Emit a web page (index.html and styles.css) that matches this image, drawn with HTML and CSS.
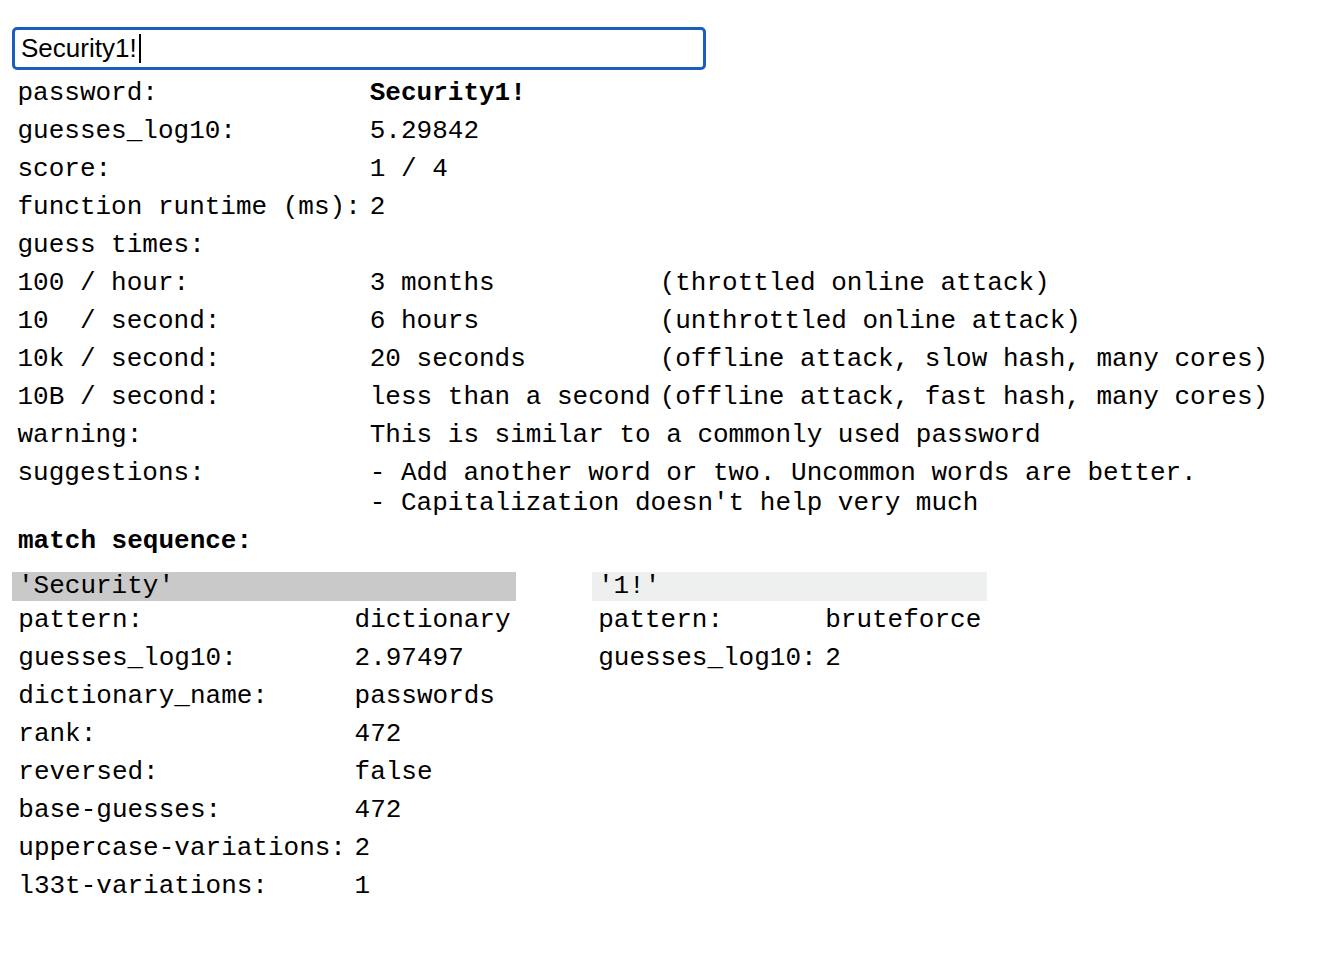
FILE: index.html
```html
<!DOCTYPE html>
<html>
<head>
<meta charset="utf-8">
<link rel="stylesheet" href="styles.css">
</head>
<body>
<div class="page">
  <div class="input-wrap">
    <input class="pw-input" type="text" value="Security1!">
    <span class="caret"></span>
  </div>
  <table class="results">
    <tr><td>password:</td><td colspan="2"><strong>Security1!</strong></td></tr>
    <tr><td>guesses_log10:</td><td colspan="2">5.29842</td></tr>
    <tr><td>score:</td><td colspan="2">1 / 4</td></tr>
    <tr><td>function runtime (ms):</td><td colspan="2">2</td></tr>
    <tr><td colspan="3">guess times:</td></tr>
    <tr><td>100 / hour:</td><td>3 months</td><td>(throttled online attack)</td></tr>
    <tr><td>10  / second:</td><td>6 hours</td><td>(unthrottled online attack)</td></tr>
    <tr><td>10k / second:</td><td>20 seconds</td><td>(offline attack, slow hash, many cores)</td></tr>
    <tr><td>10B / second:</td><td>less than a second</td><td>(offline attack, fast hash, many cores)</td></tr>
    <tr><td>warning:</td><td colspan="2">This is similar to a commonly used password</td></tr>
    <tr><td>suggestions:</td><td colspan="2">- Add another word or two. Uncommon words are better.<br>- Capitalization doesn't help very much</td></tr>
  </table>
  <div class="seq-title">match sequence:</div>
  <div class="matches">
    <div class="match">
      <div class="match-head dark">'Security'</div>
      <table class="match-table">
        <tr><td>pattern:</td><td>dictionary</td></tr>
        <tr><td>guesses_log10:</td><td>2.97497</td></tr>
        <tr><td>dictionary_name:</td><td>passwords</td></tr>
        <tr><td>rank:</td><td>472</td></tr>
        <tr><td>reversed:</td><td>false</td></tr>
        <tr><td>base-guesses:</td><td>472</td></tr>
        <tr><td>uppercase-variations:</td><td>2</td></tr>
        <tr><td>l33t-variations:</td><td>1</td></tr>
      </table>
    </div>
    <div class="match">
      <div class="match-head light">'1!'</div>
      <table class="match-table">
        <tr><td>pattern:</td><td>bruteforce</td></tr>
        <tr><td>guesses_log10:</td><td>2</td></tr>
      </table>
    </div>
  </div>
</div>
</body>
</html>
```
FILE: styles.css
```css
html, body {
  margin: 0;
  padding: 0;
  background: #ffffff;
}

body {
  font-family: "Liberation Mono", "Courier New", monospace;
  font-size: 26px;
  line-height: 30px;
  color: #000;
}

.page {
  padding: 27px 0 0 12px;
}

.input-wrap {
  position: relative;
  width: 694px;
}

.pw-input {
  display: block;
  box-sizing: border-box;
  width: 694px;
  height: 43px;
  margin: 0;
  padding: 0 6px;
  border: 3px solid #1b5fbd;
  border-radius: 5px;
  outline: none;
  font-family: "Liberation Sans", Arial, sans-serif;
  font-size: 26px;
  color: #000;
  background: #fff;
}

.caret {
  position: absolute;
  left: 127px;
  top: 7px;
  width: 2px;
  height: 29px;
  background: #000;
}

.results {
  border-collapse: separate;
  border-spacing: 0;
  margin: 4px 0 0 1px;
}

.results td,
.match-table td {
  padding: 4px 4.5px;
  vertical-align: top;
  white-space: pre;
  font-size: 26px;
  line-height: 30px;
}

.results strong {
  font-weight: bold;
}

.seq-title {
  font-weight: bold;
  padding: 4px 6px;
}

.matches {
  display: flex;
  align-items: flex-start;
  gap: 76px;
  margin-top: 12px;
}

.match {
  display: flex;
  flex-direction: column;
}

.match-head {
  height: 29px;
  line-height: 29px;
  padding-left: 6px;
  white-space: pre;
}

.match-head.dark {
  background: #c9c9c9;
}

.match-head.light {
  background: #eef0f0;
}

.match-table {
  border-collapse: separate;
  border-spacing: 0;
  margin-left: 2px;
  margin-right: 1px;
}

.match-table td {
  padding: 4px 4.3px;
}
```
